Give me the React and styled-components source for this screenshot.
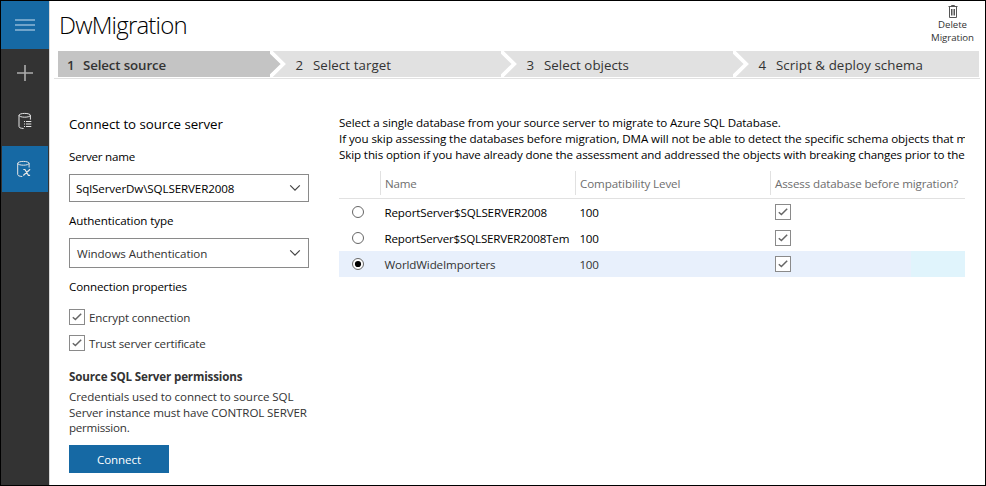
import React from 'react';
import styled, { createGlobalStyle } from 'styled-components';

const Global = createGlobalStyle`
  *, *::before, *::after { box-sizing: border-box; }
  html, body { margin: 0; padding: 0; background: #fff; }
  body { font-family: "Open Sans", "Noto Sans", sans-serif; font-size: 11.6px; color: #000; }
  svg { display: block; flex: none; }
`;

const Window = styled.div`
  display: flex;
  width: 986px;
  height: 486px;
  border: 1px solid #000;
  background: #fff;
  overflow: hidden;
  white-space: nowrap;
`;

const Sidebar = styled.nav`
  width: 49px;
  flex: none;
  background: #333;
  border-right: 1px solid #d9d9d9;
`;

const NavButton = styled.button`
  display: flex;
  align-items: center;
  justify-content: center;
  width: 48px;
  height: 48px;
  margin: 0;
  padding: 0;
  border: ${(p) => (p.$inset ? '1px solid #333' : '0')};
  background: ${(p) => (p.$active ? '#1669a4' : 'transparent')};
`;

const Main = styled.main`
  flex: 1;
  min-width: 0;
`;

const Header = styled.header`
  display: flex;
  justify-content: space-between;
  height: 50px;
  padding: 0 10px 0 9px;
`;

const Title = styled.h1`
  margin: 0;
  font-size: 24px;
  line-height: 33px;
  padding-top: 7px;
  font-weight: 300;
  letter-spacing: -0.8px;
`;

const DeleteButton = styled.button`
  display: flex;
  flex-direction: column;
  align-items: center;
  width: 45px;
  padding: 3px 0 0;
  border: 0;
  background: none;
  color: #333;
  font: 9.67px/13px "Open Sans", "Noto Sans", sans-serif;
  letter-spacing: -0.05px;
`;

const Steps = styled.ol`
  display: flex;
  list-style: none;
  margin: 0 5px 0 4px;
  padding: 0 1px 1px 4px;
  border-bottom: 1px solid #e1e1e1;
  height: 28px;
`;

const Step = styled.li`
  display: flex;
  width: ${(p) => p.$width}px;
  height: 26px;
  flex: none;
  background: ${(p) => (p.$current ? '#c4c4c4' : '#e1e1e1')};
  color: #333;
  font-size: 13.3px;
  line-height: 29px;
  font-weight: ${(p) => (p.$current ? 600 : 400)};
`;

const StepNumber = styled.span`
  width: 25px;
  padding-left: ${(p) => (p.$first ? 9 : 7.5)}px;
`;

const StepLabel = styled.span`
  flex: 1;
  letter-spacing: ${(p) => p.$track}px;
`;

const Content = styled.div`
  display: flex;
  padding: 36px 20px 0 19px;
`;

const Form = styled.section`
  width: 240px;
  margin-right: 30px;
  flex: none;
`;

const Heading = styled.h2`
  margin: 0 0 16px;
  font-size: 13.3px;
  font-weight: 400;
  line-height: 18px;
  letter-spacing: -0.04px;
`;

const Label = styled.div`
  line-height: 16px;
  margin-bottom: ${(p) => p.$gap}px;
  letter-spacing: ${(p) => p.$track}px;
`;

const Select = styled.div`
  display: flex;
  align-items: center;
  justify-content: space-between;
  height: ${(p) => (p.$tall ? 30 : 28)}px;
  padding: ${(p) => (p.$tall ? '0 7px 0 7px' : '0 7px 0 6px')};
  margin-bottom: 11px;
  border: 1px solid #8a8a8a;
  color: ${(p) => (p.$tall ? '#333' : '#000')};
  letter-spacing: ${(p) => p.$track}px;
`;

const CheckRow = styled.label`
  display: flex;
  align-items: center;
  gap: 4px;
  height: 16px;
  margin-bottom: 10px;
  color: #333;
  letter-spacing: ${(p) => p.$track}px;
`;

const Box = styled.span`
  display: flex;
  width: 16px;
  height: 16px;
  flex: none;
  border: 1px solid #8a8a8a;
  background: #fff;
`;

const Permissions = styled.div`
  margin-top: 18px;
  color: #333;
  line-height: 15.5px;
`;

const PermissionsTitle = styled.h3`
  margin: 0 0 4px;
  font-size: 11.6px;
  line-height: 16px;
  font-weight: 700;
  letter-spacing: -0.15px;
`;

const Line = styled.div`
  letter-spacing: ${(p) => p.$track}px;
`;

const ConnectButton = styled.button`
  display: block;
  width: 100px;
  height: 28px;
  margin: 9.3px 0 0;
  padding: 0;
  border: 0;
  background: #1669a4;
  color: #fff;
  font: 11.6px/30px "Open Sans", "Noto Sans", sans-serif;
  letter-spacing: -0.1px;
`;

const Databases = styled.section`
  width: 626px;
  flex: none;
  overflow: hidden;
`;

const Intro = styled.div`
  line-height: 16px;
  margin-bottom: 8px;
`;

const TableRow = styled.div`
  display: grid;
  grid-template-columns: 41px 195px 195px 195px;
  align-items: center;
  height: 26px;
  color: ${(p) => (p.$selected ? '#333' : '#000')};
  background: ${(p) => (p.$selected ? 'linear-gradient(to right, #e8f0fc 572px, #e0f4fc 572px)' : 'none')};
`;

const TableHead = styled(TableRow)`
  height: 28px;
  align-items: start;
  border-bottom: 1px solid #e1e1e1;
  color: #6e6e6e;
`;

const HeadCell = styled.div`
  height: 24px;
  padding-left: 4px;
  line-height: 26px;
  border-left: 1px solid ${(p) => (p.$blank ? 'transparent' : '#e1e1e1')};
  letter-spacing: ${(p) => p.$track}px;
`;

const Cell = styled.div`
  padding-left: 4.5px;
  padding-top: 1px;
  letter-spacing: ${(p) => p.$track}px;
`;

const BoxCell = styled.div`
  padding-left: 5px;
`;

const RadioCell = styled.div`
  padding-left: 13px;
`;

const Check = () => (
  <Box>
    <svg width="14" height="14" viewBox="0 0 14 14" fill="none" stroke="#666" strokeWidth="1.5">
      <path d="M2.8 7.2 5.4 9.5 11.2 3.7" />
    </svg>
  </Box>
);

const Radio = ({ checked }) => (
  <svg width="12" height="12" viewBox="0 0 12 12">
    <circle cx="6" cy="6" r="5.5" fill="#fff" stroke="#666" />
    {checked && <circle cx="6" cy="6" r="3.1" fill="#000" />}
  </svg>
);

const Caret = () => (
  <svg width="12" height="8" viewBox="0 0 12 8" fill="none" stroke="#444" strokeWidth="1.2">
    <path d="M1.2 1.3 6 6.1 10.8 1.3" />
  </svg>
);

const Chevron = ({ dark }) => (
  <svg width="18" height="26" viewBox="0 0 18 26">
    <rect width="18" height="26" fill="#e1e1e1" />
    <path d="M0 0 13 13 0 26z" fill={dark ? '#c4c4c4' : '#e1e1e1'} />
    <path d="M-1.5-1.5 13.2 13-1.5 27.5" fill="none" stroke="#fff" strokeWidth="3.8" />
  </svg>
);

const Cylinder = ({ shift = 0, children }) => (
  <svg width="16" height="18" viewBox={`${shift} 0 16 18`} fill="none" stroke="#e6e6e6">
    <ellipse cx="7.7" cy="3.3" rx="5.7" ry="1.9" />
    <path d="M2 3.3V14.5C2 15.6 3.4 16.3 6.6 16.5M13.4 3.3V7.6" />
    {children}
  </svg>
);

const TrashIcon = () => (
  <svg width="12" height="14" viewBox="0 0 12 14" fill="none" stroke="#555">
    <path d="M1.5 2.5H10.5M4.5 2V1.5H7.5V2M2.5 3V13.5H9.5V3M4.5 5V11.5M6 5V11.5M7.5 5V11.5" />
  </svg>
);

const databases = [
  { name: 'ReportServer$SQLSERVER2008', track: -0.15 },
  { name: 'ReportServer$SQLSERVER2008Tem', track: -0.18 },
  { name: 'WorldWideImporters', track: -0.13, selected: true },
];

export default function App() {
  return (
    <>
      <Global />
      <Window>
        <Sidebar>
          <NavButton $active aria-label="Menu">
            <svg width="20" height="12" viewBox="0 0 20 12" stroke="#8fb8d6" strokeWidth="1.6">
              <path d="M0 1H20M0 6H20M0 11H20" />
            </svg>
          </NavButton>
          <NavButton aria-label="New">
            <svg width="16" height="16" viewBox="0 0 16 16" stroke="#adadad" strokeWidth="1.6">
              <path d="M0 8H16M8 0V16" />
            </svg>
          </NavButton>
          <NavButton aria-label="Assessments">
            <Cylinder>
              <path d="M7 9.5H8M9 9.5H14.3M7 12H8M9 12H14.3M7 14.5H8M9 14.5H14.3" strokeWidth="1.1" />
            </Cylinder>
          </NavButton>
          <NavButton $active $inset aria-label="Migrations">
            <Cylinder shift={1.3}>
              <path d="M7.6 9.5H9.2L12.7 15.3H14.4M14.4 9.3 7.6 15.5" strokeWidth="1.2" />
            </Cylinder>
          </NavButton>
        </Sidebar>
        <Main>
          <Header>
            <Title>DwMigration</Title>
            <DeleteButton>
              <TrashIcon />
              <span>Delete<br />Migration</span>
            </DeleteButton>
          </Header>
          <Steps>
            <Step $width={230} $current>
              <StepNumber $first>1</StepNumber>
              <StepLabel $track={-0.13}>Select source</StepLabel>
              <Chevron dark />
            </Step>
            <Step $width={231}>
              <StepNumber>2</StepNumber>
              <StepLabel $track={0.07}>Select target</StepLabel>
              <Chevron />
            </Step>
            <Step $width={232}>
              <StepNumber>3</StepNumber>
              <StepLabel $track={0.03}>Select objects</StepLabel>
              <Chevron />
            </Step>
            <Step $width={228}>
              <StepNumber>4</StepNumber>
              <StepLabel $track={0.08}>Script &amp; deploy schema</StepLabel>
            </Step>
          </Steps>
          <Content>
            <Form>
              <Heading>Connect to source server</Heading>
              <Label $gap={9} $track={-0.23}>Server name</Label>
              <Select $track={-0.11}>SqlServerDw\SQLSERVER2008<Caret /></Select>
              <Label $gap={9} $track={-0.085}>Authentication type</Label>
              <Select $tall $track={-0.07}>Windows Authentication<Caret /></Select>
              <Label $gap={14} $track={-0.145}>Connection properties</Label>
              <CheckRow $track={-0.14}><Check />Encrypt connection</CheckRow>
              <CheckRow $track={-0.19}><Check />Trust server certificate</CheckRow>
              <Permissions>
                <PermissionsTitle>Source SQL Server permissions</PermissionsTitle>
                <Line $track={-0.1}>Credentials used to connect to source SQL</Line>
                <Line $track={-0.115}>Server instance must have CONTROL SERVER</Line>
                <Line $track={-0.24}>permission.</Line>
              </Permissions>
              <ConnectButton>Connect</ConnectButton>
            </Form>
            <Databases>
              <Intro>
                <Line $track={-0.105}>Select a single database from your source server to migrate to Azure SQL Database.</Line>
                <Line $track={-0.09}>If you skip assessing the databases before migration, DMA will not be able to detect the specific schema objects that m</Line>
                <Line $track={-0.122}>Skip this option if you have already done the assessment and addressed the objects with breaking changes prior to the</Line>
              </Intro>
              <TableHead>
                <HeadCell $blank />
                <HeadCell $track={-0.2}>Name</HeadCell>
                <HeadCell $track={-0.1}>Compatibility Level</HeadCell>
                <HeadCell $track={-0.14}>Assess database before migration?</HeadCell>
              </TableHead>
              {databases.map((db) => (
                <TableRow key={db.name} $selected={db.selected}>
                  <RadioCell><Radio checked={db.selected} /></RadioCell>
                  <Cell $track={db.track}>{db.name}</Cell>
                  <Cell $track={-0.3}>100</Cell>
                  <BoxCell><Check /></BoxCell>
                </TableRow>
              ))}
            </Databases>
          </Content>
        </Main>
      </Window>
    </>
  );
}
